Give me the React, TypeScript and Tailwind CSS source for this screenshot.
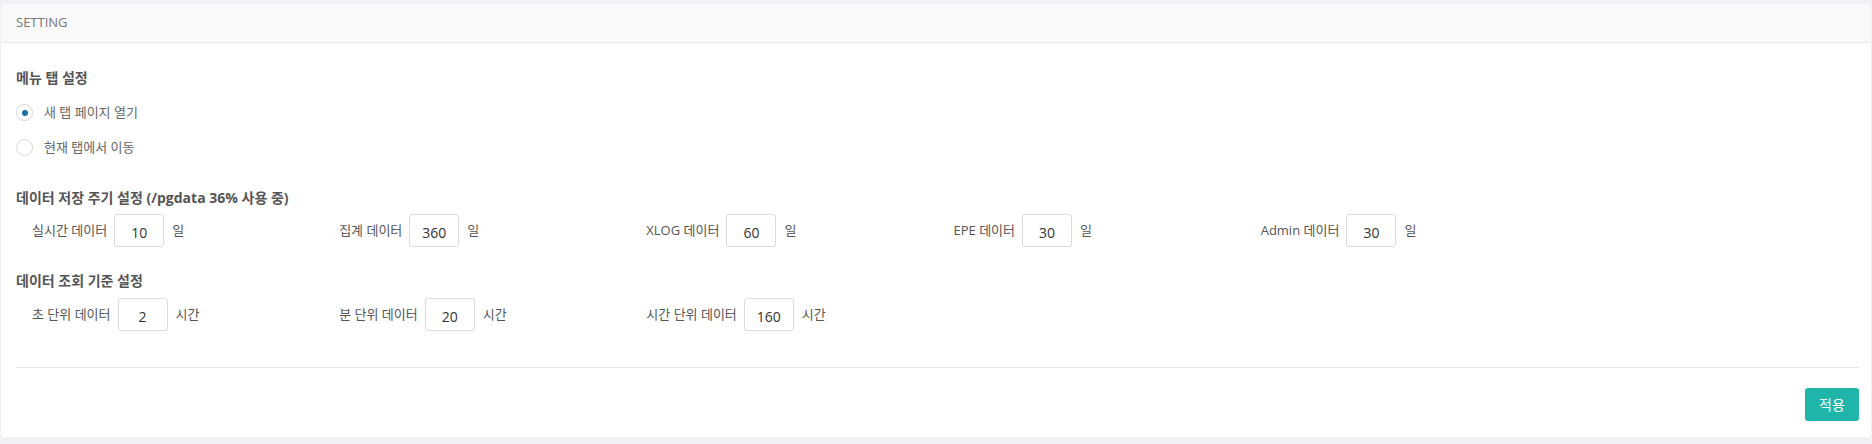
import React from "react";

const font = { fontFamily: '"Open Sans", "Noto Sans CJK KR", sans-serif' };

function Field({ label, value, unit }: { label: string; value: string; unit: string }) {
  return (
    <div className="flex items-center pl-[16px] h-[33px]">
      <span className="text-[13px] text-[#555] whitespace-nowrap">{label}</span>
      <div className="ml-[7px] w-[50px] h-[33px] border border-[#dcdcdc] rounded-[3px] flex items-center justify-center pt-[3px] text-[14px] text-[#333]">
        {value}
      </div>
      <span className="ml-[8px] text-[13px] text-[#555]">{unit}</span>
    </div>
  );
}

function Radio({ checked, label }: { checked?: boolean; label: string }) {
  return (
    <div className="flex items-center h-[35px]">
      <div className="w-[17px] h-[17px] rounded-full border border-[#d6d6d6] bg-white flex items-center justify-center">
        {checked && <div className="w-[6px] h-[6px] rounded-full bg-[#1a6fa6]" />}
      </div>
      <span className="ml-[11px] text-[13px] text-[#666]">{label}</span>
    </div>
  );
}

export default function App() {
  return (
    <div className="w-[1872px] h-[444px] bg-[#f0f1f7] pt-[4px] pb-[7px] px-[1px]" style={font}>
      <div className="bg-white rounded-[4px] h-[433px] flex flex-col">
        <div className="h-[39px] bg-[#f9f9fa] border-b border-[#ececec] rounded-t-[4px] flex items-center px-[15px] text-[13px] text-[#777]">
          SETTING
        </div>
        <div className="pl-[15px] pr-[12px] pt-[24px] pb-[16px] flex flex-col">
          <div className="h-[20px] flex items-center text-[14px] font-bold text-[#555]">메뉴 탭 설정</div>
          <div className="mt-[8px] flex flex-col">
            <Radio checked label="새 탭 페이지 열기" />
            <Radio label="현재 탭에서 이동" />
          </div>
          <div className="mt-[22px] h-[20px] flex items-center text-[14px] font-bold text-[#555]">
            데이터 저장 주기 설정 (/pgdata 36% 사용 중)
          </div>
          <div className="mt-[7px] grid grid-cols-6">
            <Field label="실시간 데이터" value="10" unit="일" />
            <Field label="집계 데이터" value="360" unit="일" />
            <Field label="XLOG 데이터" value="60" unit="일" />
            <Field label="EPE 데이터" value="30" unit="일" />
            <Field label="Admin 데이터" value="30" unit="일" />
          </div>
          <div className="mt-[23px] h-[20px] flex items-center text-[14px] font-bold text-[#555]">데이터 조회 기준 설정</div>
          <div className="mt-[8px] grid grid-cols-6">
            <Field label="초 단위 데이터" value="2" unit="시간" />
            <Field label="분 단위 데이터" value="20" unit="시간" />
            <Field label="시간 단위 데이터" value="160" unit="시간" />
          </div>
          <div className="mt-[36px] h-px bg-[#e6e6e6]" />
          <div className="mt-[20px] flex justify-end">
            <button className="w-[54px] h-[33px] rounded-[3px] bg-[#20b5aa] text-white text-[14px]">적용</button>
          </div>
        </div>
      </div>
    </div>
  );
}
